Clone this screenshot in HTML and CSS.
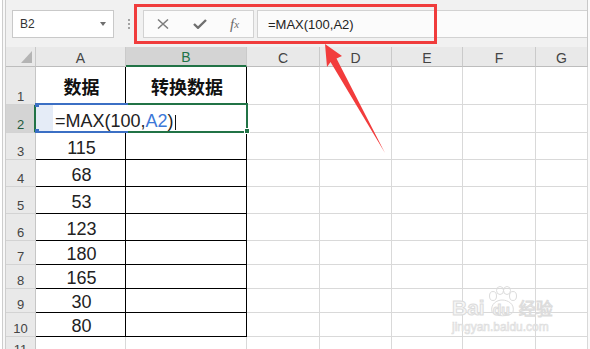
FILE: index.html
```html
<!DOCTYPE html>
<html lang="zh">
<head>
<meta charset="utf-8">
<title>Excel MAX</title>
<link rel="stylesheet" href="styles.css">
</head>
<body>
<div class="app">
  <div class="frame"></div>
  <div class="main">
    <div class="toolbar">
      <div class="namebox"><span>B2</span><i class="caret"></i></div>
      <div class="grip"><i></i><i></i><i></i></div>
      <div class="buttons">
        <svg class="ic-x" width="12" height="10" viewBox="0 0 12 10"><path d="M1 0.5 L11 9.5 M11 0.5 L1 9.5" stroke="#7d7d7d" stroke-width="1.5" fill="none"/></svg>
        <svg class="ic-ok" width="14" height="10" viewBox="0 0 14 10"><path d="M1 5 L5 8.8 L13 1" stroke="#6f6f6f" stroke-width="2.4" fill="none"/></svg>
        <span class="fx"><i>f</i><b>x</b></span>
      </div>
      <div class="formula">=MAX(100,A2)</div>
    </div>
    <div class="sheet">
      <div class="grid">
        <div class="corner"><svg class="tri" width="11" height="12" viewBox="0 0 11 12"><path d="M11 0 L11 12 L0 12 Z" fill="#b4b4b4"/></svg></div>
        <div class="ch">A</div><div class="ch on">B</div><div class="ch">C</div><div class="ch">D</div><div class="ch">E</div><div class="ch">F</div><div class="ch">G</div>

        <div class="rh">1</div><div class="c t h">数据</div><div class="c t h">转换数据</div><div class="c"></div><div class="c"></div><div class="c"></div><div class="c"></div><div class="c"></div>
        <div class="rh on">2</div><div class="c t"></div><div class="c t"></div><div class="c"></div><div class="c"></div><div class="c"></div><div class="c"></div><div class="c"></div>
        <div class="rh">3</div><div class="c t n">115</div><div class="c t"></div><div class="c"></div><div class="c"></div><div class="c"></div><div class="c"></div><div class="c"></div>
        <div class="rh">4</div><div class="c t n">68</div><div class="c t"></div><div class="c"></div><div class="c"></div><div class="c"></div><div class="c"></div><div class="c"></div>
        <div class="rh">5</div><div class="c t n">53</div><div class="c t"></div><div class="c"></div><div class="c"></div><div class="c"></div><div class="c"></div><div class="c"></div>
        <div class="rh">6</div><div class="c t n">123</div><div class="c t"></div><div class="c"></div><div class="c"></div><div class="c"></div><div class="c"></div><div class="c"></div>
        <div class="rh">7</div><div class="c t n s">180</div><div class="c t"></div><div class="c"></div><div class="c"></div><div class="c"></div><div class="c"></div><div class="c"></div>
        <div class="rh">8</div><div class="c t n s">165</div><div class="c t"></div><div class="c"></div><div class="c"></div><div class="c"></div><div class="c"></div><div class="c"></div>
        <div class="rh">9</div><div class="c t n s">30</div><div class="c t"></div><div class="c"></div><div class="c"></div><div class="c"></div><div class="c"></div><div class="c"></div>
        <div class="rh">10</div><div class="c t n s">80</div><div class="c t"></div><div class="c"></div><div class="c"></div><div class="c"></div><div class="c"></div><div class="c"></div>
        <div class="rh">11</div><div class="c"></div><div class="c"></div><div class="c"></div><div class="c"></div><div class="c"></div><div class="c"></div><div class="c"></div>
      </div>

      <div class="active"></div>
      <div class="ref"></div>
      <i class="hd-b hd-tl"></i><i class="hd-b hd-bl"></i><i class="hd-b hd-tr"></i><i class="hd-b hd-br"></i>
      <i class="hd-g"></i>
      <div class="edit">=MAX(100,<span class="blue">A2</span>)<i class="cursor"></i></div>
    </div>
  </div>
  <div class="redge"></div>
</div>

<div class="redbox"></div>
<svg class="arrow" width="590" height="349" viewBox="0 0 590 349">
  <polygon points="325,44 342,56 336.5,58.5 385,153 330.5,62 327,67" fill="#f23c3c"/>
</svg>

<div class="wm">
  <div class="wm-top">
    <span class="wm-bai">Bai</span>
    <span class="wm-paw">
      <svg width="34" height="32" viewBox="0 0 34 32">
        <g fill="none" stroke="#dcdcdc" stroke-width="1">
          <ellipse cx="8" cy="10" rx="3.5" ry="4.5"/>
          <ellipse cx="15" cy="4.5" rx="3.5" ry="4"/>
          <ellipse cx="22" cy="4.5" rx="3.5" ry="4"/>
          <ellipse cx="28" cy="10" rx="3.5" ry="4.5"/>
          <path d="M7 26 C5 18 12 14 17 14 C23 14 30 18 28 26 C26 31 9 31 7 26 Z"/>
        </g>
      </svg>
      <span class="wm-du">du</span>
    </span>
    <span class="wm-jy">经验</span>
  </div>
  <div class="wm-url">jingyan.baidu.com</div>
</div>
</body>
</html>
```
FILE: styles.css
```css
* { box-sizing: border-box; margin: 0; padding: 0; }
html, body { width: 590px; height: 349px; overflow: hidden; background: #fff; }
body { position: relative; font-family: "Liberation Sans", Arial, sans-serif; color: #222; }

.app { display: flex; height: 349px; }
.frame { flex: none; width: 4px; margin-left: 2px; border-left: 1px solid #cdcdcd; border-right: 1px solid #cdcdcd; background: #f8f8f8; }
.main { flex: none; width: 582px; display: flex; flex-direction: column; }
.redge { flex: none; width: 2px; background: #fafafa; }

/* toolbar */
.toolbar { flex: none; height: 47px; background: #f1f1f1; display: flex; align-items: flex-start; padding: 10px 0 0 6px; border-right: 1px solid #c8c8c8; }
.namebox { flex: none; width: 102px; height: 28px; background: #fff; border: 1px solid #c9c9c9; display: flex; align-items: center; padding-left: 7px; font-size: 12px; color: #333; }
.caret { margin-left: auto; margin-right: 7px; width: 0; height: 0; border-left: 3.5px solid transparent; border-right: 3.5px solid transparent; border-top: 4px solid #6e6e6e; }
.grip { flex: none; margin-left: 14px; width: 2px; display: flex; flex-direction: column; gap: 2px; padding-top: 9px; }
.grip i { display: block; width: 2px; height: 2px; background: #a3a3a3; }
.buttons { flex: none; margin-left: 13px; width: 111px; height: 28px; background: #fbfbfb; border: 1px solid #d2d2d2; display: flex; align-items: center; padding-left: 13px; }
.ic-x { display: block; }
.ic-ok { display: block; margin-left: 24px; }
.fx { margin-left: 23px; font-family: "Liberation Serif", "Times New Roman", serif; font-style: italic; color: #6a6a6a; line-height: 14px; display: flex; align-items: flex-end; }
.fx i { font-size: 15px; }
.fx b { font-weight: normal; font-size: 11px; margin-left: 0; }
.formula { flex: 1; margin-left: 3px; height: 28px; background: #fbfbfb; border: 1px solid #d2d2d2; border-right: none; font-size: 13px; padding-left: 10px; display: flex; align-items: center; color: #222; }

/* sheet */
.sheet { position: relative; flex: 1; }
.grid { display: grid; grid-template-columns: 30px 90px 121px 73px 72px 71px 73px 52px; grid-template-rows: 20px 38px 28px repeat(4, 27px) repeat(4, 24px) 21px; }
.corner { background: #e9e9e9; border-right: 1px solid #c9c9c9; border-bottom: 1px solid #bdbdbd; display: flex; align-items: flex-end; justify-content: flex-end; padding: 0 3px 3px 0; }
.tri { display: block; }
.ch { background: #e9e9e9; border-right: 1px solid #cacaca; border-bottom: 1px solid #bdbdbd; font-size: 14px; line-height: 16px; display: flex; align-items: flex-end; justify-content: center; color: #444; }
.ch.on { background: #d4d4d4; color: #217346; border-bottom: 2px solid #217346; line-height: 15px; }
.rh { background: #e9e9e9; border-right: 1px solid #c6c6c6; border-bottom: 1px solid #d3d3d3; font-size: 13px; line-height: 15px; display: flex; align-items: flex-end; justify-content: center; color: #444; }
.rh.on { background: #d4d4d4; border-right: 2px solid #217346; color: #1f5a3c; padding-left: 1px; }
.c { border-right: 1px solid #d9d9d9; border-bottom: 1px solid #d9d9d9; }
.c.t { border-right-color: #000; border-bottom-color: #000; }
.n { font-size: 18px; line-height: 20px; display: flex; align-items: flex-end; justify-content: center; padding-bottom: 1px; color: #222; padding-left: 2px; }
.n.s { padding-bottom: 0; }
.h { font-family: "Noto Sans CJK SC", sans-serif; font-weight: 700; font-size: 18px; display: flex; align-items: center; justify-content: center; color: #111; padding-left: 2px; }

/* selection overlays */
.active { position: absolute; left: 120px; top: 56px; width: 122px; height: 30px; border: 2px solid #217346; border-left: none; }
.ref { position: absolute; left: 30px; top: 56px; width: 90px; height: 30px; border: 2px solid #3b6fc4; border-left: none; background: #e5ecf7; }
.hd-b { position: absolute; width: 4px; height: 4px; background: #3b6fc4; }
.hd-tl { left: 29px; top: 56px; }
.hd-bl { left: 29px; top: 82px; }
.hd-tr { left: 118px; top: 56px; }
.hd-br { left: 118px; top: 82px; }
.hd-g { position: absolute; left: 238px; top: 81px; width: 6px; height: 6px; background: #217346; border: 1px solid #fff; }
.edit { position: absolute; left: 47px; top: 58px; width: 192px; height: 26px; background: #fff; font-size: 18px; line-height: 20px; padding: 6px 0 0 2px; color: #222; white-space: nowrap; }
.blue { color: #3c78d8; }
.cursor { display: inline-block; width: 1px; height: 15px; background: #111; margin-left: 1px; vertical-align: -3px; }

/* annotation */
.redbox { position: absolute; left: 134px; top: 4px; width: 303px; height: 40px; border: 3px solid #f03c3c; }
.arrow { position: absolute; left: 0; top: 0; }

/* watermark */
.wm { position: absolute; left: 452px; top: 286px; width: 106px; }
.wm-top { display: flex; align-items: flex-end; height: 32px; }
.wm-bai, .wm-du, .wm-jy { color: #f6f6f6; -webkit-text-stroke: 1px #dcdcdc; font-weight: 700; }
.wm-bai { font-size: 21px; line-height: 20px; font-family: "Liberation Sans", sans-serif; }
.wm-paw { position: relative; width: 34px; height: 32px; }
.wm-paw svg { position: absolute; left: 0; top: 0; }
.wm-du { position: absolute; left: 8px; bottom: 1px; font-size: 14px; line-height: 14px; font-family: "Liberation Sans", sans-serif; }
.wm-jy { font-size: 17px; line-height: 20px; font-family: "Noto Sans CJK SC", sans-serif; font-weight: 400; }
.wm-url { margin-top: 3px; font-size: 12px; line-height: 13px; color: #f4f4f4; -webkit-text-stroke: 0.6px #dcdcdc; font-family: "Liberation Sans", sans-serif; }
```
